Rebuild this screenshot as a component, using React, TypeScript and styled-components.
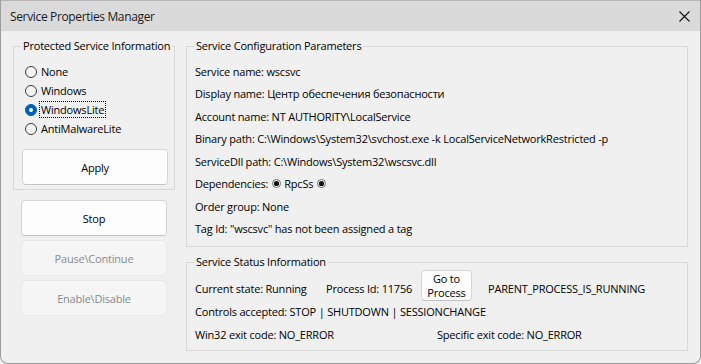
import styled, { createGlobalStyle } from "styled-components";

const GlobalStyle = createGlobalStyle`
  html, body {
    margin: 0;
    padding: 0;
    background: #f0f0f0;
  }
  body {
    font-family: "Segoe UI", "Open Sans", "Noto Sans", sans-serif;
    font-size: 11px;
    letter-spacing: -0.2px;
    color: #000;
  }
`;

export const Window = styled.div`
  width: 701px;
  height: 364px;
  box-sizing: border-box;
  border: 1px solid #9c9c9c;
  border-top-color: #b5b5b5;
  border-radius: 0 0 8px 8px;
  background: #f0f0f0;
  display: flex;
  flex-direction: column;
  overflow: hidden;
`;

export const TitleBar = styled.div`
  height: 30px;
  background: #dadada;
  display: flex;
  align-items: center;
  justify-content: space-between;
  padding: 0 10px 0 9px;
  flex-shrink: 0;
`;

export const Title = styled.span`
  font-size: 12px;
  letter-spacing: -0.35px;
  color: #1a1a1a;
`;

export const Body = styled.div`
  flex: 1;
  display: flex;
  gap: 11px;
  padding: 7px 12px 0 12px;
`;

export const LeftColumn = styled.div`
  width: 162px;
  display: flex;
  flex-direction: column;
`;

export const RightColumn = styled.div`
  flex: 1;
  display: flex;
  flex-direction: column;
  gap: 7px;
`;

export const Group = styled.fieldset`
  margin: 0;
  padding: 0 8px;
  border: 1px solid #d9d9d9;
  min-width: 0;
`;

export const Legend = styled.legend`
  padding: 0 2px;
  margin-left: -1px;
  line-height: 16px;
  font-size: 11px;
  white-space: nowrap;
`;

export const RadioList = styled.div`
  display: flex;
  flex-direction: column;
  padding-top: 8px;
`;

export const RadioRow = styled.label`
  height: 19px;
  display: flex;
  align-items: center;
  gap: 2px;
  padding-left: 3px;
`;

export const RadioCircle = styled.span<{ $checked?: boolean }>`
  width: 12px;
  height: 12px;
  box-sizing: border-box;
  border-radius: 50%;
  border: 1px solid ${(p) => (p.$checked ? "#005fb8" : "#3d3d3d")};
  background: ${(p) => (p.$checked ? "#005fb8" : "#f5f5f5")};
  display: flex;
  align-items: center;
  justify-content: center;

  &::after {
    content: "";
    display: ${(p) => (p.$checked ? "block" : "none")};
    width: 4px;
    height: 4px;
    border-radius: 50%;
    background: #fff;
  }
`;

export const RadioLabel = styled.span<{ $focused?: boolean }>`
  line-height: 15px;
  padding: 0 1px;
  border: 1px dotted ${(p) => (p.$focused ? "#000" : "transparent")};
`;

export const PushButton = styled.button<{ $top?: number }>`
  font-family: inherit;
  font-size: 11px;
  letter-spacing: inherit;
  height: 36px;
  width: 146px;
  margin: ${(p) => p.$top ?? 0}px 0 0 8px;
  padding: 0;
  border-radius: 4px;
  border: 1px solid #d5d5d5;
  border-bottom-color: #c4c4c4;
  background: #fdfdfd;
  color: #000;

  &:disabled {
    background: #f5f5f5;
    border-color: #e8e8e8;
    color: #8a8a8a;
  }
`;

export const GroupButton = styled(PushButton)`
  margin: 11px 0 4px 0;
`;

export const ConfigList = styled.div`
  padding: 6px 0 6px 0;
  display: flex;
  flex-direction: column;
`;

export const ConfigRow = styled.div`
  height: 22.5px;
  display: flex;
  align-items: center;
  white-space: nowrap;
`;

export const DepDot = styled.svg`
  width: 9px;
  height: 9px;
  margin: 0 3px 0 4px;
`;

export const StatusList = styled.div`
  padding: 0 0 4px 0;
  display: flex;
  flex-direction: column;
`;

export const StatusRow = styled.div<{ $tall?: boolean }>`
  height: ${(p) => (p.$tall ? 30 : 23)}px;
  display: flex;
  align-items: ${(p) => (p.$tall ? "flex-end" : "center")};
  white-space: nowrap;
`;

export const Cell = styled.span<{ $w?: number; $tall?: boolean }>`
  width: ${(p) => (p.$w ? `${p.$w}px` : "auto")};
  flex-shrink: 0;
  line-height: ${(p) => (p.$tall ? "23px" : "normal")};
`;

export const SmallButton = styled.button`
  font-family: inherit;
  font-size: 11px;
  letter-spacing: inherit;
  width: 51px;
  height: 31px;
  padding: 0;
  margin: 0 16px 0 0;
  align-self: flex-start;
  border-radius: 4px;
  border: 1px solid #d5d5d5;
  border-bottom-color: #c4c4c4;
  background: #fdfdfd;
  color: #000;
  display: flex;
  flex-direction: column;
  align-items: center;
  justify-content: center;
`;

export const ButtonLine = styled.span`
  display: block;
  height: 14px;
  line-height: 14px;
`;

const CloseIcon = () => (
  <svg width="11" height="11" viewBox="0 0 11 11">
    <path d="M0.5 0.5 L10.5 10.5 M10.5 0.5 L0.5 10.5" stroke="#111" strokeWidth="1.1" />
  </svg>
);

const Dot = () => (
  <DepDot viewBox="0 0 9 9">
    <circle cx="4.5" cy="4.5" r="4" fill="#fff" stroke="#6a6a6a" strokeWidth="1" />
    <circle cx="4.5" cy="4.5" r="2.6" fill="#111" />
  </DepDot>
);

const protections = ["None", "Windows", "WindowsLite", "AntiMalwareLite"];
const selected = "WindowsLite";

export default function App() {
  return (
    <>
      <GlobalStyle />
      <Window>
        <TitleBar>
          <Title>Service Properties Manager</Title>
          <CloseIcon />
        </TitleBar>
        <Body>
          <LeftColumn>
            <Group>
              <Legend>Protected Service Information</Legend>
              <RadioList>
                {protections.map((name) => (
                  <RadioRow key={name}>
                    <RadioCircle $checked={name === selected} />
                    <RadioLabel $focused={name === selected}>{name}</RadioLabel>
                  </RadioRow>
                ))}
              </RadioList>
              <GroupButton>Apply</GroupButton>
            </Group>
            <PushButton $top={10}>Stop</PushButton>
            <PushButton $top={4} disabled>
              Pause\Continue
            </PushButton>
            <PushButton $top={4} disabled>
              Enable\Disable
            </PushButton>
          </LeftColumn>
          <RightColumn>
            <Group>
              <Legend>Service Configuration Parameters</Legend>
              <ConfigList>
                <ConfigRow>Service name: wscsvc</ConfigRow>
                <ConfigRow>Display name: Центр обеспечения безопасности</ConfigRow>
                <ConfigRow>Account name: NT AUTHORITY\LocalService</ConfigRow>
                <ConfigRow>
                  Binary path: C:\Windows\System32\svchost.exe -k LocalServiceNetworkRestricted -p
                </ConfigRow>
                <ConfigRow>ServiceDll path: C:\Windows\System32\wscsvc.dll</ConfigRow>
                <ConfigRow>
                  Dependencies:
                  <Dot />
                  RpcSs
                  <Dot />
                </ConfigRow>
                <ConfigRow>Order group: None</ConfigRow>
                <ConfigRow>Tag Id: "wscsvc" has not been assigned a tag</ConfigRow>
              </ConfigList>
            </Group>
            <Group>
              <Legend>Service Status Information</Legend>
              <StatusList>
                <StatusRow $tall>
                  <Cell $w={131} $tall>
                    Current state: Running
                  </Cell>
                  <Cell $w={95} $tall>
                    Process Id: 11756
                  </Cell>
                  <SmallButton>
                    <ButtonLine>Go to</ButtonLine>
                    <ButtonLine>Process</ButtonLine>
                  </SmallButton>
                  <Cell $tall>PARENT_PROCESS_IS_RUNNING</Cell>
                </StatusRow>
                <StatusRow>
                  <Cell>Controls accepted: STOP | SHUTDOWN | SESSIONCHANGE</Cell>
                </StatusRow>
                <StatusRow>
                  <Cell $w={242}>Win32 exit code: NO_ERROR</Cell>
                  <Cell>Specific exit code: NO_ERROR</Cell>
                </StatusRow>
              </StatusList>
            </Group>
          </RightColumn>
        </Body>
      </Window>
    </>
  );
}
